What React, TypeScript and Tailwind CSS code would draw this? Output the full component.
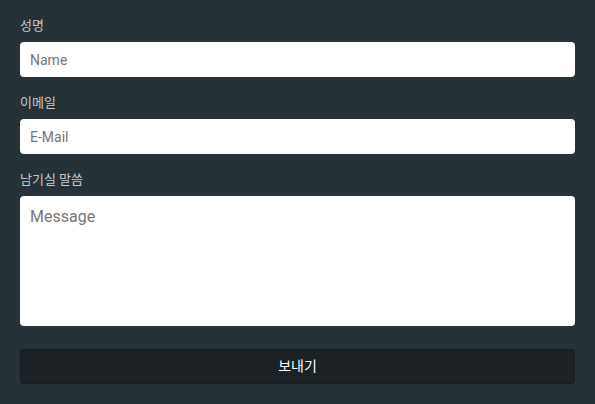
export default function App() {
  return (
    <div
      className="min-h-[404px] w-full bg-[#263238] px-5 pt-4 pb-5"
      style={{ fontFamily: 'Roboto, "Noto Sans CJK KR", sans-serif' }}
    >
      <form className="flex flex-col" onSubmit={(e) => e.preventDefault()}>
        <label className="block text-[13px] leading-5 text-[#c3c7c9]">성명</label>
        <input
          type="text"
          placeholder="Name"
          className="mt-1.5 h-[35px] w-full rounded-[4px] bg-white px-2.5 text-[14px] text-gray-800 placeholder:text-[#767676] outline-none"
        />

        <label className="mt-4 block text-[13px] leading-5 text-[#c3c7c9]">이메일</label>
        <input
          type="text"
          placeholder="E-Mail"
          className="mt-1.5 h-[35px] w-full rounded-[4px] bg-white px-2.5 text-[14px] text-gray-800 placeholder:text-[#767676] outline-none"
        />

        <label className="mt-4 block text-[13px] leading-5 text-[#c3c7c9]">남기실 말씀</label>
        <textarea
          placeholder="Message"
          className="mt-1.5 h-[130px] w-full resize-none rounded-[4px] bg-white px-2.5 pt-[11px] pb-2 text-[16px] leading-5 text-gray-800 placeholder:text-[#767676] outline-none"
        />

        <button
          type="submit"
          className="mt-[23px] h-[35px] w-full rounded-[4px] bg-[#1b2124] text-[14px] font-normal text-white shadow-[inset_0_0_2px_rgba(0,0,0,0.35)]"
        >
          보내기
        </button>
      </form>
    </div>
  )
}
